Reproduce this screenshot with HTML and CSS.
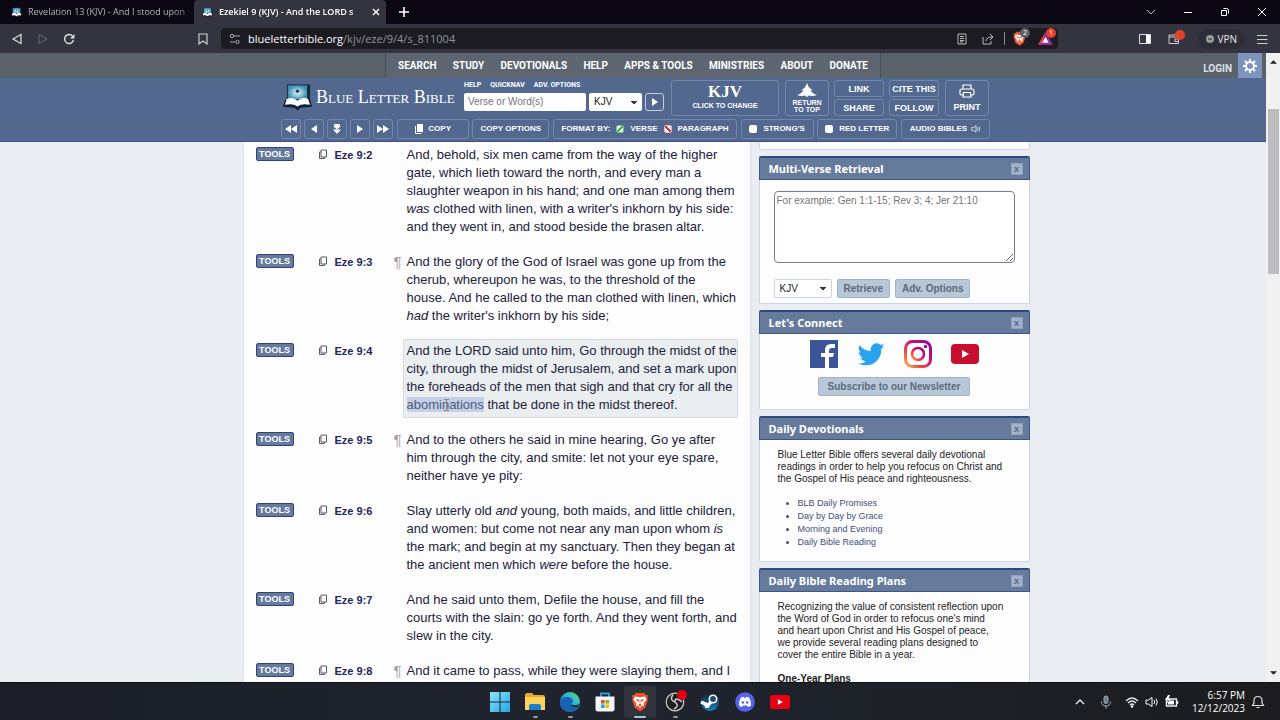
FILE: index.html
```html
<!DOCTYPE html>
<html lang="en">
<head>
<meta charset="utf-8">
<title>Ezekiel 9 (KJV)</title>
<link rel="stylesheet" href="styles.css">
</head>
<body>
<svg width="0" height="0" class="defs" aria-hidden="true">
  <defs>
    <linearGradient id="g-ig" x1="0" y1="1" x2="1" y2="0"><stop offset="0" stop-color="#fdb04a"/><stop offset=".3" stop-color="#f0454a"/><stop offset=".6" stop-color="#c9107a"/><stop offset="1" stop-color="#8a0a94"/></linearGradient>
    <radialGradient id="g-logo"><stop offset="0" stop-color="#e6f8fc"/><stop offset="1" stop-color="#3a8fb0"/></radialGradient>
    <linearGradient id="g-win" x1="0" y1="0" x2="1" y2="1"><stop offset="0" stop-color="#8fe4fb"/><stop offset="1" stop-color="#22a5e6"/></linearGradient>
    <linearGradient id="g-edge" x1="0" y1="1" x2="1" y2="0"><stop offset="0" stop-color="#1368c4"/><stop offset=".55" stop-color="#2bb3dc"/><stop offset="1" stop-color="#5fdc6e"/></linearGradient>
    <linearGradient id="g-steam" x1="0" y1="0" x2="0" y2="1"><stop offset="0" stop-color="#10203c"/><stop offset="1" stop-color="#1683b8"/></linearGradient>
    <symbol id="i-copy" viewBox="0 0 10 10"><path d="M3 1h5.500v7H3zM3 3H1.500v6.500H6.500V8" fill="none" stroke="currentColor"/></symbol>
    <symbol id="i-book" viewBox="0 0 30 28"><path d="M4 1h24v17H4z" fill="#15283c"/><path d="M5 2h20v15H5z" fill="url(#g-logo)"/><circle cx="15" cy="8" r="1.800" fill="#24445e"/><path d="M2 17L0 24l12 1 3 3 3-3 12-1-2-8z" fill="#111f35"/><path d="M4 16c4-2 8-1 11 2 3-3 7-4 11-2l2 6c-5-1-10-1-13 2-3-3-8-3-13-2z" fill="#fff"/></symbol>
    <symbol id="i-brave" viewBox="0 0 18 20"><path d="M5 1h8l2 2 2 .5-.5 3 .5 1-2.500 8L9 19.500 3.500 15.500 1 7.500l.5-1-.5-3L3 3z" fill="#f0502a"/><path d="M4 4.500l5 .8 5-.8 1.500 3-3 4 .5 1.500-4 3-4-3 .5-1.500-3-4z" fill="#fff"/><path d="M5 7.500l3 .5-.5 1.500zM13 7.500l-3 .5.5 1.500zM9 8v4l-1.500 1H10.500L9 12M6.500 14.500L9 13l2.500 1.500" fill="#f0502a" stroke="#f0502a" stroke-width=".6"/></symbol>
    <symbol id="i-speaker" viewBox="0 0 14 12"><path d="M1 4h2.500L7 1.500v9L3.500 8H1zM9 4q1.300 2 0 4M11 2.500q2.600 3.500 0 7" fill="none" stroke="currentColor"/></symbol>
    <symbol id="i-right" viewBox="0 0 10 10"><path d="M2 1v8l6-4z" fill="currentColor"/></symbol>
    <symbol id="i-youtube" viewBox="0 0 28 20"><rect width="28" height="20" rx="4" fill="currentColor"/><path d="M11 6l7 4-7 4z" fill="#fff"/></symbol>
  </defs>
</svg>

<div class="tabs">
  <div class="tab"><svg class="fav"><use href="#i-book"/></svg><span class="tab-title">Revelation 13 (KJV) - And I stood upon</span></div>
  <div class="tab active"><svg class="fav"><use href="#i-book"/></svg><span class="tab-title">Ezekiel 9 (KJV) - And the LORD s</span><button class="plain" aria-label="Close tab"><svg class="s8" viewBox="0 0 8 8"><path d="M1 1l6 6M7 1L1 7" stroke="#fff" stroke-width="1.400"/></svg></button></div>
  <button class="plain new-tab" aria-label="New tab"><svg class="s10" viewBox="0 0 10 10"><path d="M5 0v10M0 5h10" stroke="#fff" stroke-width="1.600"/></svg></button>
  <div class="win-controls">
    <button class="plain" aria-label="Search tabs"><svg class="s10" viewBox="0 0 10 10"><path d="M1 3l4 4 4-4" fill="none" stroke="#bbb"/></svg></button>
    <button class="plain" aria-label="Minimize"><svg class="s10" viewBox="0 0 10 10"><path d="M1 5.500h8" stroke="#fff"/></svg></button>
    <button class="plain" aria-label="Restore"><svg class="s10" viewBox="0 0 10 10"><path d="M1.500 3.500h5v5h-5zM3.500 1.500h3q2 0 2 2v3" fill="none" stroke="#fff"/></svg></button>
    <button class="plain" aria-label="Close"><svg class="s10" viewBox="0 0 10 10"><path d="M1 1l8 8M9 1L1 9" stroke="#fff"/></svg></button>
  </div>
</div>

<div class="toolbar">
  <div class="nav-icons">
    <button class="plain" aria-label="Back"><svg class="s12" viewBox="0 0 12 12"><path d="M10 1.500v9L2 6z" fill="none" stroke="#ddd" stroke-width="1.200"/></svg></button>
    <button class="plain" aria-label="Forward"><svg class="s12" viewBox="0 0 12 12"><path d="M2 1.500v9L10 6z" fill="none" stroke="#666873"/></svg></button>
    <button class="plain" aria-label="Reload"><svg class="s12" viewBox="0 0 12 12"><path d="M9.500 3A4.500 4.500 0 1 0 10.500 7" fill="none" stroke="#ddd" stroke-width="1.400"/><path d="M11.500 1v4.500H7z" fill="#ddd"/></svg></button>
  </div>
  <button class="plain bookmark" aria-label="Bookmark"><svg class="s12" viewBox="0 0 12 12"><path d="M2 1h8v10L6 8 2 11z" fill="none" stroke="#ccc" stroke-width="1.200"/></svg></button>
  <div class="url">
    <svg class="s12" viewBox="0 0 12 12"><path d="M5 3h6M1 9h5" stroke="#aaa" stroke-width="1.200"/><circle cx="3" cy="3" r="1.700" fill="none" stroke="#aaa"/><circle cx="8.500" cy="9" r="1.700" fill="none" stroke="#aaa"/></svg>
    <span class="address"><b>blueletterbible.org</b>/kjv/eze/9/4/s_811004</span>
    <svg class="s12" viewBox="0 0 12 12"><path d="M2 1h8v10H2zM4 3.500h4M4 5.500h4M4 7.500h4M4 9h3" fill="none" stroke="#bbb"/></svg>
    <svg class="s12 share" viewBox="0 0 12 12"><path d="M1 4v7h8V8M4 8q0-4 6-4M8 1l3 3-3 3" fill="none" stroke="#bbb"/></svg>
    <span class="divider"></span>
    <span class="ext"><svg class="ext-icon"><use href="#i-brave"/></svg><span class="badge grey">2</span></span>
    <span class="ext"><svg class="ext-icon" viewBox="0 0 14 14"><path d="M7 1L0 13h14z" fill="#8a2aa0"/><path d="M7 1L0 13l4-2z" fill="#f04a24"/><path d="M7 5.500L4 11h6z" fill="#fff"/></svg><span class="badge red">1</span></span>
  </div>
  <div class="right-icons">
    <svg class="s12" viewBox="0 0 12 12"><path d="M.500 1.500h11v9H.500z" fill="none" stroke="#ddd"/><path d="M7 2h4v8H7z" fill="#fff"/></svg>
    <span class="ext"><svg class="s12" viewBox="0 0 12 12"><path d="M1 2h8M1 2v8.500h9.500V4H1M10.500 6H7v2.500h3.500" fill="none" stroke="#ccc"/></svg><span class="badge red dot"></span></span>
    <button class="vpn"><svg class="s8" viewBox="0 0 8 8"><circle cx="4" cy="4" r="4" fill="#999"/><path d="M2 4h4" stroke="#333"/></svg>VPN</button>
    <button class="plain" aria-label="Menu"><svg class="s12" viewBox="0 0 12 12"><path d="M1 2.500h10.500M1 6.500h10.500M1 10.500h10.500" stroke="#ccc" stroke-width="1.200"/></svg></button>
  </div>
</div>

<div class="viewport">
  <div class="page">
    <nav class="site-nav">
      <div class="side"></div>
      <div class="links"><a href="#">SEARCH</a><a href="#">STUDY</a><a href="#">DEVOTIONALS</a><a href="#">HELP</a><a href="#">APPS &amp; TOOLS</a><a href="#">MINISTRIES</a><a href="#">ABOUT</a><a href="#">DONATE</a></div>
      <div class="side end"><a href="#">LOGIN</a><button class="plain gear" aria-label="Settings"><svg class="s14" viewBox="0 0 14 14"><circle cx="7" cy="7" r="4" fill="none" stroke="#fff" stroke-width="2"/><path d="M7 0v3M7 11v3M0 7h3M11 7h3M2 2l2 2M10 10l2 2M12 2l-2 2M4 10l-2 2" stroke="#fff" stroke-width="2"/></svg></button></div>
    </nav>

    <header class="head">
      <div class="row top-row">
        <a class="brand" href="#"><svg class="logo"><use href="#i-book"/></svg><span>Blue Letter Bible</span></a>
        <form class="search">
          <div class="mini"><a href="#">HELP</a><a href="#">QUICKNAV</a><a href="#">ADV. OPTIONS</a></div>
          <div class="fields"><input type="text" placeholder="Verse or Word(s)" aria-label="Verse or Word(s)"><select aria-label="Translation"><option>KJV</option></select><button class="hb go" type="button" aria-label="Go"><svg class="s10"><use href="#i-right"/></svg></button></div>
        </form>
        <button class="hb version"><strong>KJV</strong>CLICK TO CHANGE</button>
        <button class="hb to-top"><svg viewBox="0 0 20 14"><path d="M10 0q1 4 4 6 2 1 2 1.500l-2.500-.5Q15 10.500 20 12q-4 1.500-8 .500L10 14 8 12.500Q4 13.500 0 12q5-1.500 6.500-5L4 7.500Q4 7 6 6q3-2 4-6z" fill="#fff"/></svg>RETURN<br>TO TOP</button>
        <div class="pair"><button class="hb">LINK</button><button class="hb">SHARE</button></div>
        <div class="pair"><button class="hb">CITE THIS</button><button class="hb">FOLLOW</button></div>
        <button class="hb print"><svg viewBox="0 0 16 14"><path d="M4 5V1h8v4M4 11H2.500Q1 11 1 9.500V7q0-2 2-2h10q2 0 2 2v2.500q0 1.500-1.500 1.500H12M4.500 8.500h7l.5 4.500H4z" fill="none" stroke="#fff" stroke-width="1.200"/></svg>PRINT</button>
      </div>
      <div class="row bottom-row">
        <div class="steps">
          <button class="hb" aria-label="Previous book"><svg viewBox="0 0 12 10"><path d="M6 1v8L0 5zM12 1v8L6 5z" fill="#fff"/></svg></button>
          <button class="hb" aria-label="Previous chapter"><svg viewBox="0 0 12 10"><path d="M9 1v8L3 5z" fill="#fff"/></svg></button>
          <button class="hb" aria-label="Scroll down"><svg viewBox="0 0 12 10"><path d="M3 0h6v1.500H8V2h2L6 5.500 2 2h2v-.5H3zM2 5.500h8L6 10z" fill="#fff"/></svg></button>
          <button class="hb" aria-label="Next chapter"><svg viewBox="0 0 12 10"><path d="M3 1v8l6-4z" fill="#fff"/></svg></button>
          <button class="hb" aria-label="Next book"><svg viewBox="0 0 12 10"><path d="M0 1v8l6-4zM6 1v8l6-4z" fill="#fff"/></svg></button>
        </div>
        <button class="hb w-copy"><svg class="s10" viewBox="0 0 10 10"><path d="M3 0h6v8H3z" fill="#fff"/><path d="M1.500 2v7.500h6" fill="none" stroke="#fff"/></svg>COPY</button>
        <button class="hb w-opts">COPY OPTIONS</button>
        <div class="hb w-format">FORMAT BY: <label><input type="radio" name="f" class="on" checked>VERSE</label><label><input type="radio" name="f" class="off">PARAGRAPH</label></div>
        <label class="hb w-strong"><input type="checkbox">STRONG'S</label>
        <label class="hb w-red"><input type="checkbox">RED LETTER</label>
        <button class="hb w-audio">AUDIO BIBLES<svg class="s10"><use href="#i-speaker"/></svg></button>
      </div>
    </header>

    <main class="content">
      <section class="verses">
        <article class="verse"><button class="tools">TOOLS</button><svg class="s10 copy"><use href="#i-copy"/></svg><a href="#">Eze 9:2</a><span class="pil"></span>
          <p>And, behold, six men came from the way of the higher<br>gate, which lieth toward the north, and every man a<br>slaughter weapon in his hand; and one man among them<br><i>was</i> clothed with linen, with a writer's inkhorn by his side:<br>and they went in, and stood beside the brasen altar.</p></article>
        <article class="verse"><button class="tools">TOOLS</button><svg class="s10 copy"><use href="#i-copy"/></svg><a href="#">Eze 9:3</a><span class="pil">¶</span>
          <p>And the glory of the God of Israel was gone up from the<br>cherub, whereupon he was, to the threshold of the<br>house. And he called to the man clothed with linen, which<br><i>had</i> the writer's inkhorn by his side;</p></article>
        <article class="verse"><button class="tools">TOOLS</button><svg class="s10 copy"><use href="#i-copy"/></svg><a href="#">Eze 9:4</a><span class="pil"></span>
          <p class="current">And the LORD said unto him, Go through the midst of the<br>city, through the midst of Jerusalem, and set a mark upon<br>the foreheads of the men that sigh and that cry for all the<br><mark>abominations<svg class="caret" viewBox="0 0 5 12"><path d="M0 .500h5M0 11.500h5M2.500 0v12" stroke="#8a8a80"/></svg></mark> that be done in the midst thereof.</p></article>
        <article class="verse"><button class="tools">TOOLS</button><svg class="s10 copy"><use href="#i-copy"/></svg><a href="#">Eze 9:5</a><span class="pil">¶</span>
          <p>And to the others he said in mine hearing, Go ye after<br>him through the city, and smite: let not your eye spare,<br>neither have ye pity:</p></article>
        <article class="verse"><button class="tools">TOOLS</button><svg class="s10 copy"><use href="#i-copy"/></svg><a href="#">Eze 9:6</a><span class="pil"></span>
          <p>Slay utterly old <i>and</i> young, both maids, and little children,<br>and women: but come not near any man upon whom <i>is</i><br>the mark; and begin at my sanctuary. Then they began at<br>the ancient men which <i>were</i> before the house.</p></article>
        <article class="verse"><button class="tools">TOOLS</button><svg class="s10 copy"><use href="#i-copy"/></svg><a href="#">Eze 9:7</a><span class="pil"></span>
          <p>And he said unto them, Defile the house, and fill the<br>courts with the slain: go ye forth. And they went forth, and<br>slew in the city.</p></article>
        <article class="verse"><button class="tools">TOOLS</button><svg class="s10 copy"><use href="#i-copy"/></svg><a href="#">Eze 9:8</a><span class="pil">¶</span>
          <p>And it came to pass, while they were slaying them, and I</p></article>
      </section>

      <aside class="sidebar">
        <div class="panel stub"></div>
        <section class="panel">
          <h2>Multi-Verse Retrieval<button class="x" aria-label="Close">x</button></h2>
          <div class="body retrieval">
            <textarea placeholder="For example: Gen 1:1-15; Rev 3; 4; Jer 21:10" aria-label="Verses"></textarea>
            <div class="controls"><select aria-label="Version"><option>KJV</option></select><button class="pb">Retrieve</button><button class="pb">Adv. Options</button></div>
          </div>
        </section>
        <section class="panel">
          <h2>Let's Connect<button class="x" aria-label="Close">x</button></h2>
          <div class="body connect">
            <div class="social">
              <a href="#" aria-label="Facebook"><svg viewBox="0 0 28 28"><path d="M0 0h28v28H0z" fill="#3b5598"/><path d="M15 28V17h-4v-4h4V10q0-6 6-6h4v4h-3q-3 0-3 3v2h5l-1 4h-4v11z" fill="#fff"/></svg></a>
              <a href="#" aria-label="Twitter"><svg viewBox="0 0 28 28"><path d="M27 6.500l-2.800 2.600C25 20 14 29.500 1 23.500c3 .2 5.500-.5 7.600-2.300-2.500-.2-4.200-1.500-5-3.700h2.300c-2.600-.9-4.100-2.800-4.200-5.400l2.400.7C1.700 11 1 8 2.500 5.300c3 3.600 6.600 5.500 11.300 5.800C13 6 16.500 3 20 3.200c1.400.1 2.700.7 3.700 1.700L27 3.600l-2.200 3z" fill="#2aa3ef"/></svg></a>
              <a href="#" aria-label="Instagram"><svg viewBox="0 0 28 28"><rect x="1.500" y="1.500" width="25" height="25" rx="7" fill="none" stroke="url(#g-ig)" stroke-width="3"/><circle cx="14" cy="14" r="6" fill="none" stroke="url(#g-ig)" stroke-width="2.600"/><circle cx="21.500" cy="6.500" r="1.700" fill="#8a0a94"/></svg></a>
              <a href="#" aria-label="YouTube" class="yt"><svg viewBox="0 0 28 28"><use href="#i-youtube" y="4" width="28" height="20"/></svg></a>
            </div>
            <button class="pb wide">Subscribe to our Newsletter</button>
          </div>
        </section>
        <section class="panel">
          <h2>Daily Devotionals<button class="x" aria-label="Close">x</button></h2>
          <div class="body text">
            <p>Blue Letter Bible offers several daily devotional<br>readings in order to help you refocus on Christ and<br>the Gospel of His peace and righteousness.</p>
            <ul><li><a href="#">BLB Daily Promises</a></li><li><a href="#">Day by Day by Grace</a></li><li><a href="#">Morning and Evening</a></li><li><a href="#">Daily Bible Reading</a></li></ul>
          </div>
        </section>
        <section class="panel">
          <h2>Daily Bible Reading Plans<button class="x" aria-label="Close">x</button></h2>
          <div class="body text">
            <p>Recognizing the value of consistent reflection upon<br>the Word of God in order to refocus one's mind<br>and heart upon Christ and His Gospel of peace,<br>we provide several reading plans designed to<br>cover the entire Bible in a year.</p>
            <h3>One-Year Plans</h3>
          </div>
        </section>
      </aside>
    </main>
  </div>
  <div class="scrollbar"><svg viewBox="0 0 8 5"><path d="M0 5l4-4 4 4z" fill="#222"/></svg><span class="thumb"></span><svg viewBox="0 0 8 5"><path d="M0 0l4 4 4-4z" fill="#222"/></svg></div>
</div>

<footer class="taskbar">
  <div class="apps">
    <button class="app" aria-label="Start"><svg viewBox="0 0 20 20"><path d="M0 0h9.500v9.500H0zM10.500 0H20v9.500h-9.500zM0 10.500h9.500V20H0zM10.500 10.500H20V20h-9.500z" fill="url(#g-win)"/></svg></button>
    <button class="app open" aria-label="File Explorer"><svg viewBox="0 0 20 20"><path d="M0 3q0-2 2-2h5l2 2h9q2 0 2 2v13H0z" fill="#e6ab2c"/><path d="M0 5h20v13H0z" fill="#fbd45e"/><path d="M4 18v-4q0-2 2-2h8q2 0 2 2v4z" fill="#1d7fc9"/></svg></button>
    <button class="app open" aria-label="Edge"><svg viewBox="0 0 20 20"><circle cx="10" cy="10" r="10" fill="url(#g-edge)"/><path d="M0 10q1-5 7-5 5 0 6 4 0 2-2 3 0 3 5 3.500 2 0 3-1-3 6-10 5.500Q0 19 0 10z" fill="#1762b5"/><path d="M11 12q0 3 5 3.500 1 0 2-.5L20 10q-2 4-6 3-2 0-3-1z" fill="#1f242d"/></svg></button>
    <button class="app" aria-label="Store"><svg viewBox="0 0 20 20"><path d="M6 5V1.500h8V5" fill="none" stroke="#2f9be0" stroke-width="1.800"/><path d="M.500 4.500h19V17q0 2.500-2.500 2.500H3Q.500 19.500.500 17z" fill="#f4f5f6"/><path d="M6 8h3.600v3.600H6z" fill="#f04a25"/><path d="M10.400 8H14v3.600h-3.600z" fill="#7cba28"/><path d="M6 12.400h3.600V16H6z" fill="#22a2e8"/><path d="M10.400 12.400H14V16h-3.600z" fill="#f8b713"/></svg></button>
    <button class="app active-app" aria-label="Brave"><svg><use href="#i-brave"/></svg></button>
    <button class="app open" aria-label="OBS"><svg viewBox="0 0 20 20" class="obs"><circle cx="10" cy="10" r="8.800" fill="#202124" stroke="#cfcfcf" stroke-width="1.200"/><path d="M10 10Q4 8 8 2.500M10 10q5 4-1 7M10 10q0-6 7 0" fill="none" stroke="#cfcfcf" stroke-width="1.400"/><circle cx="17" cy="3" r="5" fill="#e00010"/></svg></button>
    <button class="app" aria-label="Steam"><svg viewBox="0 0 20 20"><circle cx="10" cy="10" r="9" fill="url(#g-steam)"/><path d="M1 10l7 3 4-4" fill="none" stroke="#fff" stroke-width="3.500"/><circle cx="13" cy="7" r="3.700" fill="#24466c" stroke="#fff" stroke-width="1.600"/><circle cx="7" cy="13.500" r="2.500" fill="#fff"/></svg></button>
    <button class="app" aria-label="Discord"><svg viewBox="0 0 20 20"><circle cx="10" cy="10" r="9.800" fill="#5562ea"/><path d="M6 5.500l2.500-.7.5 1h2l.5-1 2.500.7Q16.500 9 16 13.500q-1.500 1.200-3 1.500l-.8-1.500H7.800L7 15q-1.500-.3-3-1.500Q3.500 9 6 5.500z" fill="#fff"/><circle cx="7.800" cy="10.500" r="1.300" fill="#5562ea"/><circle cx="12.200" cy="10.500" r="1.300" fill="#5562ea"/></svg></button>
    <button class="app red-app" aria-label="YouTube"><svg viewBox="0 -3 28 26"><use href="#i-youtube" width="28" height="20"/></svg></button>
  </div>
  <div class="tray">
    <svg class="s12" viewBox="0 0 12 12"><path d="M2 8l4-4 4 4" fill="none" stroke="#eee" stroke-width="1.300"/></svg>
    <svg class="s14 mic" viewBox="0 0 14 14"><rect x="5" y="1" width="4" height="7.500" rx="2" fill="#6c7c88" stroke="#9fb0bc"/><path d="M2.500 6.500q0 4.500 4.500 4.500t4.500-4.500M7 11v2.500" fill="none" stroke="#9fb0bc"/></svg>
    <svg class="s14" viewBox="0 0 14 14"><path d="M1 6q6-6 12 0M3 8q4-4 8 0M5 10q2-2 4 0" fill="none" stroke="#e6e6e6" stroke-width="1.300"/><circle cx="7" cy="11.500" r="1.200" fill="#fff"/></svg>
    <svg class="s14"><use href="#i-speaker"/></svg>
    <svg class="s14 batt" viewBox="0 0 14 14"><path d="M1.500 4h10v7h-10zM12.500 6v3" fill="none" stroke="#eee" stroke-width="1.400"/><path d="M3 5.500h6v4H3zM3 0L0 5h3L1 9l5-5H3.500L5 0z" fill="#fff"/></svg>
    <div class="clock">6:57 PM<br>12/12/2023</div>
    <svg class="s14" viewBox="0 0 14 14"><path d="M1.500 10.500h11L11 8V5.500q0-4-4-4t-4 4V8zM5.500 12.500h3" fill="none" stroke="#ddd" stroke-width="1.200"/></svg>
  </div>
</footer>
</body>
</html>
```
FILE: styles.css
```css
* { box-sizing: border-box; }
body { margin: 0; height: 100vh; display: flex; flex-direction: column; overflow: hidden; font: 10px/12px "Liberation Sans", Arial, sans-serif; color: #222; }
a { color: inherit; text-decoration: none; }
button, select, input, textarea { font: inherit; color: inherit; margin: 0; }
svg { display: block; flex: none; }
.defs { position: absolute; }
.plain { background: none; border: 0; padding: 0; display: flex; align-items: center; justify-content: center; }
.s8 { width: 8px; height: 8px; }
.s10 { width: 10px; height: 10px; }
.s12 { width: 12px; height: 12px; }
.s14 { width: 14px; height: 14px; }

/* browser chrome */
.tabs { height: 24px; flex: none; display: flex; background: #0b0814; color: #b5b3bb; font: 9px/24px "Open Sans", sans-serif; }
.tab { width: 194px; display: flex; align-items: center; gap: 6px; padding: 0 2px 0 11px; }
.tab.active { width: 192px; background: #333440; color: #fff; padding: 0 6px 0 8px; border-radius: 4px 4px 0 0; font-weight: 600; }
.fav { width: 11px; height: 11px; }
.tab-title { flex: 1; white-space: nowrap; mask-image: linear-gradient(90deg, #000 88%, rgb(0 0 0 / 40%)); }
.new-tab { width: 36px; }
.win-controls { margin-left: auto; display: flex; gap: 27px; padding-right: 13px; }
.toolbar { height: 29px; flex: none; display: flex; align-items: center; background: #333440; color: #e8e8ea; }
.nav-icons { display: flex; gap: 14px; padding-left: 11px; width: 197px; }
.bookmark { width: 24px; padding-right: 24px; }
.bookmark svg { margin-left: 12px; }
.url { flex: 1; height: 21px; background: #1b1b21; border-radius: 4px; display: flex; align-items: center; gap: 7px; padding: 0 1px 0 8px; color: #92929a; font: 11px/21px "Open Sans", sans-serif; }
.address { flex: 1; white-space: nowrap; }
.address b { font-weight: 400; color: #fff; }
.share { margin: 0 3px 0 7px; }
.divider { width: 1px; height: 13px; background: #88888e; }
.ext { position: relative; width: 19px; }
.ext-icon { width: 15px; height: 15px; }
.badge { position: absolute; left: 8px; top: -3px; width: 10px; height: 10px; border-radius: 5px; color: #fff; font: 7px/10px "Open Sans", sans-serif; text-align: center; }
.grey { background: #5b6068; }
.red { background: #e5402c; }
.dot { left: 7px; }
.right-icons { width: 222px; padding-right: 12px; display: flex; align-items: center; justify-content: flex-end; gap: 17px; }
.vpn { display: flex; align-items: center; gap: 3px; background: #2d2d38; border: 0; border-radius: 10px; padding: 0 8px; margin: 0 -6px 0 -6px; font: 10px/20px "Open Sans", sans-serif; }

/* page frame */
.viewport { flex: 1; min-height: 0; display: flex; }
.page { flex: 1; min-width: 0; display: flex; flex-direction: column; background: #e9edf1; }
.scrollbar { width: 14px; background: #f1f1f1; display: flex; flex-direction: column; align-items: center; padding: 6px 0; }
.scrollbar svg { width: 7px; height: 5px; }
.thumb { width: 11px; height: 165px; margin: 45px 0 auto; background: #bdbdbf; }

.site-nav { flex: none; height: 25px; display: flex; padding-left: 4px; background: #59616b; color: #fff; font: bold 10px/25px Roboto, sans-serif; }
.links { display: flex; justify-content: space-between; width: 496px; padding: 0 12px; border: 1px solid #474e57; border-width: 0 1px; background: #5d6570; }
.side { flex: 1; }
.end { display: flex; justify-content: flex-end; gap: 6px; padding-right: 4px; }
.end > a { line-height: 31px; color: #dfe1e4; }
.gear { width: 24px; background: #7d94bd; }

.head { flex: none; background: #53688f; border-bottom: 1px solid #3b5380; display: flex; flex-direction: column; align-items: center; gap: 3px; padding: 2px 0 2px 5px; color: #fff; font-weight: bold; }
.row { display: flex; width: 709px; }
.top-row { height: 36px; }
.bottom-row { height: 20px; justify-content: space-between; }
.hb { display: flex; align-items: center; justify-content: center; gap: 4px; border: 1px solid #7187ae; border-radius: 3px; background: transparent; color: #fff; padding: 0; font: bold 9px/10px "Liberation Sans", Arial, sans-serif; white-space: nowrap; }
.bottom-row .hb { font-size: 8px; }
.brand { display: flex; align-items: center; width: 183px; padding: 0 0 2px 2px; gap: 4px; font: 18px/20px "Liberation Serif", serif; font-variant: small-caps; white-space: nowrap; }
.logo { width: 29px; height: 28px; }
.search { width: 200px; margin-right: 7px; }
.mini { display: flex; gap: 9px; height: 13px; font: bold 7px/10px Roboto, sans-serif; }
.fields { display: flex; gap: 3px; height: 18px; }
.fields input { flex: 1; min-width: 0; border: 0; border-radius: 2px; padding: 0 4px; font: 10px/18px "Liberation Sans", sans-serif; color: #555; }
select { appearance: none; border: 0; border-radius: 2px; color: #222; font: 10px/16px "Liberation Sans", sans-serif; padding: 0 5px; background: linear-gradient(to bottom left, #333 50%, transparent 51%) no-repeat right 8px center / 3px 3px, linear-gradient(to bottom right, #333 50%, transparent 51%) no-repeat right 5px center / 3px 3px, #fff; }
.fields select { width: 53px; }
.go { width: 19px; border-color: #c3cde0; }
.hb.version { width: 108px; flex-direction: column; gap: 2px; font-size: 7px; margin-right: 6px; }
.version strong { font: bold 17px/14px "Liberation Serif", serif; }
.hb.to-top { display: block; width: 44px; margin-right: 5px; font-size: 7px; line-height: 7px; text-align: center; }
.to-top svg { width: 20px; height: 14px; margin: 0 auto 2px; }
.print { width: 44px; flex-direction: column; }
.print svg { width: 16px; height: 14px; }
.pair { width: 50px; margin-right: 5px; display: grid; grid-template-rows: 1fr 1fr; gap: 2px; }
.pair + .pair { margin-right: 6px; }
.steps { display: flex; gap: 3px; }
.steps .hb { width: 20px; }
.steps svg { width: 12px; height: 10px; }
.w-copy { width: 72px; }
.w-opts { width: 77px; }
.w-format { width: 184px; }
.w-format label { display: flex; align-items: center; gap: 6px; margin-left: 2px; }
.w-strong { width: 73px; }
.w-red { width: 80px; }
.w-audio { width: 89px; }
.hb input { appearance: none; width: 8px; height: 8px; border-radius: 2px; background: #fff; }
.w-strong input, .w-red input { margin-right: 2px; }
.hb .on { border: 1px solid #6fcf73; background: linear-gradient(135deg, #fff 40%, #45ad4c 40% 60%, #fff 60%); }
.hb .off { border: 1px solid #f0b0b8; background: linear-gradient(45deg, #fff 35%, #d03848 35% 65%, #fff 65%); }

/* content */
.content { flex: 1; min-height: 0; overflow: hidden; display: flex; justify-content: center; gap: 8px; padding-left: 6px; }
.verses { width: 508px; padding: 4px 12px 0; background: #fdfdfe; border: 1px solid #dde2e8; border-width: 0 1px; display: flex; flex-direction: column; gap: 17px; font-size: 13px; line-height: 18px; color: #22223a; }
.verse { display: grid; grid-template-columns: 62px 17px 59px 13px 1fr; align-items: start; flex: none; }
.verse p { margin: 0; white-space: nowrap; }
.tools { justify-self: start; width: 38px; height: 14px; margin-top: 1px; padding: 0; border: 1px solid #2f4570; border-radius: 2px; background: #667a9e; color: #fff; font: bold 9px/12px "Liberation Sans", sans-serif; }
.copy { margin-top: 3px; color: #5b5b66; }
.verse > a { font-weight: bold; font-size: 11px; color: #23275c; }
.pil { color: #a0a0a4; font-size: 15px; }
.verse .current { margin: -3px 0 -4px -4px; padding: 2px 0 3px 3px; background: #eaeef0; border: 1px solid #d5dade; border-radius: 2px; }
mark { position: relative; color: #4e5a80; background: #c5d0e6; }
.caret { position: absolute; left: 37px; top: 2px; width: 5px; height: 12px; }

.sidebar { width: 271px; display: flex; flex-direction: column; gap: 6px; }
.panel { flex: none; background: #fdfdfe; border: 1px solid #ccd4e0; border-top: 0; border-radius: 2px; }
.stub { height: 8px; }
.panel h2 { margin: 0 -1px; height: 24px; padding: 1px 6px 0 9px; display: flex; align-items: center; justify-content: space-between; background: #667b9c; border: 1px solid #3c5685; border-top: 2px solid #2c4a7c; border-radius: 2px 2px 0 0; color: #fff; font: bold 11px/16px "Noto Sans", sans-serif; }
.x { width: 12px; height: 12px; padding: 0; background: #a3b2c9; border: 1px solid #8fa1be; color: #50648c; font: bold 9px/9px "Liberation Sans", sans-serif; }
.retrieval { padding: 11px 14px 5px; }
textarea { display: block; width: 100%; height: 72px; padding: 2px; border: 1px solid #777c90; border-radius: 4px; background: #fff; line-height: 13px; }
textarea::placeholder, input::placeholder { color: #757575; opacity: 1; }
.controls { display: flex; gap: 5px; margin-top: 16px; height: 19px; }
.controls select { width: 58px; border: 1px solid #ccd4e0; }
.pb { height: 19px; border: 1px solid #a3b4c8; border-radius: 2px; background: #b9c8d8; color: #5b6a80; font-weight: bold; line-height: 15px; padding: 0 6px; white-space: nowrap; }
.pb.wide { padding: 0 9px; }
.connect { display: flex; flex-direction: column; align-items: center; gap: 9px; padding: 6px 0 13px; }
.social { display: flex; align-items: center; gap: 19px; }
.social svg { width: 28px; height: 28px; }
.social .yt { color: #c8102e; }
.text { padding: 9px 0 12px 18px; white-space: nowrap; }
.text p { margin: 0; }
.text ul { margin: 12px 0 0; padding-left: 20px; line-height: 13px; font-size: 9px; color: #444f78; }
.text h3 { margin: 12px 0 0; font: bold 10px/12px "Liberation Sans", sans-serif; }

/* taskbar */
.taskbar { flex: none; height: 38px; display: grid; grid-template-columns: 1fr auto 1fr; background: linear-gradient(90deg, #1b1e26, #1f242e 50%, #1c1c1e); border-top: 1px solid #101216; color: #fff; }
.apps { grid-column: 2; display: flex; align-items: center; gap: 3px; }
.app { position: relative; width: 32px; height: 32px; padding: 6px; background: none; border: 0; border-radius: 3px; }
.app svg { width: 20px; height: 20px; }
.app .obs { overflow: visible; }
.app.open::after, .active-app::after { content: ""; position: absolute; left: 14px; bottom: 0; width: 5px; height: 2px; border-radius: 1px; background: #999; }
.active-app { background: #2f333b; }
.active-app::after { left: 10px; width: 12px; background: #a9c3d4; }
.red-app { color: #e60012; }
.tray { display: flex; align-items: center; justify-content: flex-end; gap: 6px; padding-right: 15px; }
.mic { margin: 0 6px 0 7px; }
.batt { margin-right: 7px; }
.clock { text-align: right; font: 10px/13px "Open Sans", sans-serif; }
```
